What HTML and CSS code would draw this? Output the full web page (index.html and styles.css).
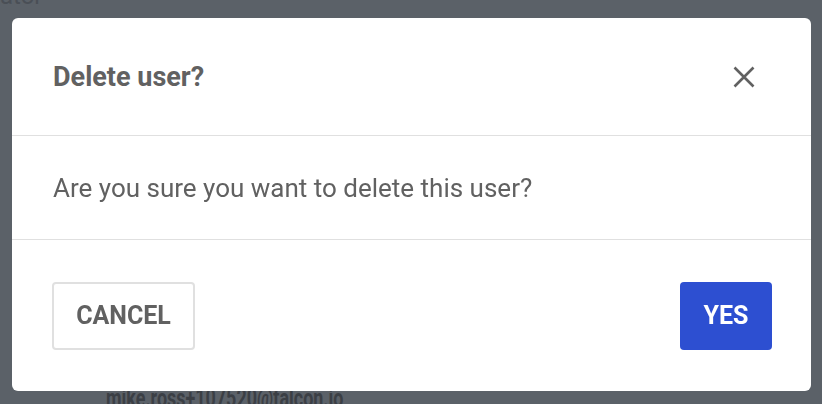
FILE: index.html
```html
<!DOCTYPE html>
<html>
<head>
<meta charset="utf-8">
<link rel="stylesheet" href="styles.css">
</head>
<body>
<div class="page">
  <div class="role">ator</div>
  <div class="email">mike.ross+107520@falcon.io</div>
</div>
<div class="overlay">
  <div class="modal">
    <div class="modal-header">
      <h2 class="title">Delete user?</h2>
      <button class="close" aria-label="Close">
        <svg width="22" height="22" viewBox="0 0 22 22"><path d="M1.5 1.5 L20.5 20.5 M20.5 1.5 L1.5 20.5" stroke="#616161" stroke-width="2.6" fill="none"/></svg>
      </button>
    </div>
    <div class="modal-body">Are you sure you want to delete this user?</div>
    <div class="modal-footer">
      <button class="btn btn-cancel">CANCEL</button>
      <button class="btn btn-yes">YES</button>
    </div>
  </div>
</div>
</body>
</html>
```
FILE: styles.css
```css
html, body {
  margin: 0;
  padding: 0;
  height: 100%;
  overflow: hidden;
}
body {
  background: #5b6168;
  font-family: Roboto, "Liberation Sans", sans-serif;
}
.page {
  height: 404px;
  display: flex;
  flex-direction: column;
  justify-content: space-between;
}
.role {
  font-size: 24px;
  line-height: 24px;
  margin-top: -16px;
  color: #4a4f56;
}
.email {
  font-size: 26px;
  font-weight: 700;
  line-height: 26px;
  margin-bottom: -7px;
  margin-left: 106px;
  color: #3b3f45;
  transform: scaleX(0.69);
  transform-origin: left top;
  white-space: nowrap;
}
.overlay {
  position: fixed;
  inset: 0;
  padding: 18px 11px 13px 12px;
}
.modal {
  background: #fff;
  border-radius: 6px;
  height: 373px;
  display: flex;
  flex-direction: column;
}
.modal-header {
  height: 118px;
  display: flex;
  align-items: center;
  justify-content: space-between;
  padding: 0 56px 0 41px;
  border-bottom: 1px solid #e0e0e0;
  box-sizing: border-box;
}
.title {
  margin: 0;
  font-size: 27px;
  font-weight: 700;
  color: #616161;
}
.close {
  border: 0;
  background: none;
  padding: 0;
  display: flex;
}
.modal-body {
  height: 104px;
  box-sizing: border-box;
  display: flex;
  align-items: center;
  padding: 0 41px;
  font-size: 26px;
  color: #616161;
  border-bottom: 1px solid #e0e0e0;
}
.modal-footer {
  flex: 1;
  display: flex;
  align-items: center;
  justify-content: space-between;
  padding: 0 39px 0 40px;
}
.btn {
  height: 68px;
  border-radius: 4px;
  font-family: Roboto, "Liberation Sans", sans-serif;
  font-size: 25px;
  font-weight: 700;
  padding: 0;
}
.btn-cancel {
  width: 143px;
  background: #fff;
  border: 2px solid #e0e0e0;
  color: #616161;
}
.btn-yes {
  width: 92px;
  background: #2d4fd1;
  border: 0;
  color: #fff;
}
```
